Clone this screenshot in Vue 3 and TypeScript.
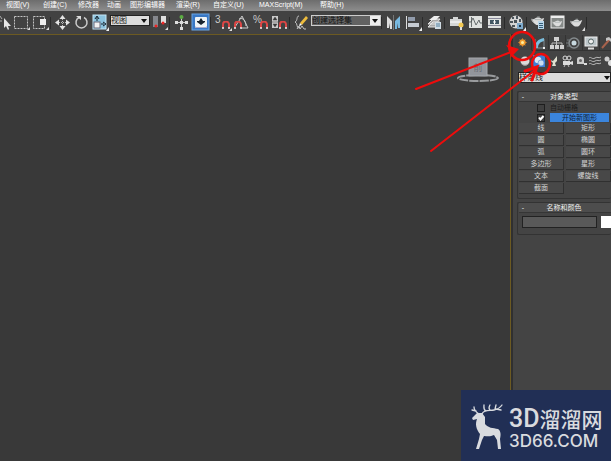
<script setup lang="ts">
import { ref } from 'vue'

interface Tool {
  id: string
  label: string
  glyph?: string
}

const menus: string[] = ['视图(V)', '创建(C)', '修改器', '动画', '图形编辑器', '渲染(R)', '自定义(U)', 'MAXScript(M)', '帮助(H)']

const selectTools: Tool[] = [
  { id: 'region', label: '矩形选择区域' },
  { id: 'window', label: '窗口/交叉' },
  { id: 'sep', label: '' },
  { id: 'move', label: '移动' },
  { id: 'rotate', label: '旋转' },
  { id: 'scale', label: '缩放' },
]
const snapTools: Tool[] = [
  { id: 'pivot', label: '使用轴点中心' },
  { id: 'sep', label: '' },
  { id: 'manipulate', label: '选择并操纵' },
  { id: 'keyboard', label: '键盘快捷键覆盖' },
  { id: 'sep', label: '' },
  { id: 'snap3', label: '捕捉开关', glyph: '3' },
  { id: 'angle', label: '角度捕捉' },
  { id: 'percent', label: '百分比捕捉', glyph: '%' },
  { id: 'spinner', label: '微调器捕捉' },
  { id: 'sep', label: '' },
  { id: 'sets', label: '编辑命名选择集' },
]
const renderTools: Tool[] = [
  { id: 'sep', label: '' },
  { id: 'mirror', label: '镜像' },
  { id: 'align', label: '对齐' },
  { id: 'sep', label: '' },
  { id: 'layers', label: '层管理器' },
  { id: 'sep', label: '' },
  { id: 'ribbon', label: '功能区' },
  { id: 'curve', label: '曲线编辑器' },
  { id: 'schematic', label: '图解视图' },
  { id: 'sep', label: '' },
  { id: 'material', label: '材质编辑器' },
  { id: 'sep', label: '' },
  { id: 'rendersetup', label: '渲染设置' },
  { id: 'frame', label: '渲染帧窗口' },
  { id: 'teapot', label: '渲染产品' },
  { id: 'sep', label: '' },
]
const tabs: Tool[] = [
  { id: 'create', label: '创建' },
  { id: 'modify', label: '修改' },
  { id: 'hierarchy', label: '层次' },
  { id: 'motion', label: '运动' },
  { id: 'display', label: '显示' },
  { id: 'utilities', label: '工具' },
]
const categories: Tool[] = [
  { id: 'geometry', label: '几何体' },
  { id: 'shapes', label: '图形' },
  { id: 'lights', label: '灯光' },
  { id: 'cameras', label: '摄影机' },
  { id: 'helpers', label: '辅助对象' },
  { id: 'warps', label: '空间扭曲' },
  { id: 'systems', label: '系统' },
]
const objectTypes: string[] = ['线', '矩形', '圆', '椭圆', '弧', '圆环', '多边形', '星形', '文本', '螺旋线', '截面']

const autoGrid = ref(false)
const startNew = ref(true)
const objectName = ref('')
const category = ref('shapes')
</script>

<template>
  <div class="app">
    <svg class="sprite" aria-hidden="true">
      <symbol id="i-cursor" viewBox="0 0 12 19"><path d="M0 3l2 3M0 8h2" stroke="#aaa" /><path d="M4 5v10l2-2 2 4 1-1-1-3h3z" fill="#e6e6e6" /></symbol>
      <symbol id="i-region" viewBox="0 0 19 19"><rect x="2.500" y="3.500" width="13" height="12" fill="none" stroke="#c4c4c4" stroke-dasharray="2 1" /><path d="M18 14v3h-3z" fill="#ddd" /></symbol>
      <symbol id="i-window" viewBox="0 0 19 19"><rect x="2.500" y="3.500" width="11" height="12" fill="none" stroke="#c4c4c4" stroke-dasharray="2 1" /><rect x="9" y="6" width="6" height="6" fill="#eee" /><path d="M18 14v3h-3z" fill="#ddd" /></symbol>
      <symbol id="i-move" viewBox="0 0 19 19"><path d="M9.500 2l3 4h-6zM9.500 17l3-4h-6zM2 9.500l4-3v6zM17 9.500l-4-3v6z" fill="#e4e4e4" /><path d="M9.500 6v7M6 9.500h7" stroke="#bbb" stroke-dasharray="1 1" /></symbol>
      <symbol id="i-rotate" viewBox="0 0 19 19"><path d="M7 4.500a5.500 5.500 0 1 0 5 0" fill="none" stroke="#ccc" stroke-width="1.500" /><path d="M4 3h5v4z" fill="#ddd" /></symbol>
      <symbol id="i-scale" viewBox="0 0 19 19"><rect x="2" y="2" width="13" height="14" fill="#8bc3de" stroke="#c5e6f5" /><rect x="3" y="9" width="6" height="6" fill="#f1f1f1" stroke="#667" /><path d="M6 8V4M4 6l2-3 2 3M10 11h3M12 9l3 2-3 2" fill="none" stroke="#15222c" /><path d="M18 14v4h-3z" fill="#eee" /></symbol>
      <symbol id="i-pivot" viewBox="0 0 19 19"><rect x="3" y="3" width="5" height="11" fill="#85878d" /><rect x="11" y="3" width="5" height="7" fill="#dedede" /><circle cx="6" cy="13" r="1.500" fill="#e22" /><circle cx="13" cy="10" r="1.500" fill="#e22" /><path d="M18 14v3h-3z" fill="#ddd" /></symbol>
      <symbol id="i-manipulate" viewBox="0 0 19 19"><path d="M9.500 4v12M4 9.500h12" stroke="#ccc" /><circle cx="9.500" cy="4" r="2" fill="#5cac43" /><path d="M3 8h3v3H3zM13 8h3v3h-3zM8 14h3v3H8zM8 8h3v3H8z" fill="#ddd" /></symbol>
      <symbol id="i-keyboard" viewBox="0 0 19 19"><rect x="1" y="1" width="17" height="16" fill="#3978c5" stroke="#6aa5e5" /><rect x="4" y="4" width="12" height="10" rx="1" fill="#eef4f7" /><path d="M10 5l2 3h2v1l-4 3-4-3V8h2z" fill="#18232e" /><path d="M4 14.500h12" stroke="#aac" /></symbol>
      <symbol id="i-magnet" viewBox="0 0 8 8"><path d="M1 7V3.500a3 3 0 0 1 6 0V7" fill="none" stroke="#dc4645" stroke-width="2" /><path d="M0 7h2M6 7h2" stroke="#eee" stroke-width="1.500" /></symbol>
      <symbol id="i-snap3" viewBox="0 0 19 19"><use href="#i-magnet" x="9" y="8" width="8" height="8" /><path d="M19 15v3h-3z" fill="#ddd" /></symbol>
      <symbol id="i-angle" viewBox="0 0 19 19"><path d="M3 14L10 3l6 12H9M7 6c4-2 7 2 7 7" fill="none" stroke="#ccc" /><use href="#i-magnet" x="2" y="8" width="8" height="8" /></symbol>
      <symbol id="i-percent" viewBox="0 0 19 19"><use href="#i-magnet" x="9" y="8" width="8" height="8" /></symbol>
      <symbol id="i-spinner" viewBox="0 0 19 19"><rect x="2" y="3" width="6" height="12" fill="#c8c8c8" /><path d="M5 4l2 3H3zM5 14l2-3H3zM2 9h6" fill="#333" stroke="#444" stroke-width=".5" /><use href="#i-magnet" x="9" y="8" width="8" height="8" /></symbol>
      <symbol id="i-sets" viewBox="0 0 19 19"><path d="M7 3C4 3 6 8 3 9c3 1 1 6 4 6M5 16l2-3 1 3 2-3 2 3h2" fill="none" stroke="#c4c4c4" /><path d="M8 10l6-7 2 2-6 7z" fill="#edbc3d" /><path d="M8 10l2 2-3 1z" fill="#fff" /></symbol>
      <symbol id="i-mirror" viewBox="0 0 19 19"><path d="M3 3l5 5v8H6v-6l-1 5H3z" fill="#dedede" /><path d="M16 3l-5 5v8h2v-6l1 5h2z" fill="#78b8df" /><path d="M9.500 2v15" stroke="#777" /></symbol>
      <symbol id="i-align" viewBox="0 0 19 19"><path d="M3.500 3v13" stroke="#ddd" /><rect x="5" y="4" width="7" height="4" fill="#929cac" /><rect x="5" y="10" width="11" height="4" fill="#c6cbd2" /><path d="M19 14v4h-3z" fill="#eee" /></symbol>
      <symbol id="i-layers" viewBox="0 0 19 19"><path d="M3 14l5-5h7l-4 5zM3 11l5-5h7l-4 5z" fill="#aaa" stroke="#e5e5e5" /><path d="M4 7l5-4h6l-4 4z" fill="#eee" /><rect x="10" y="9" width="6" height="7" fill="#d0dce4" /><path d="M11 11h4M11 13h4" stroke="#55809e" /></symbol>
      <symbol id="i-ribbon" viewBox="0 0 19 19"><path d="M3 6h3V4h5v2h4v7H3z" fill="#d4d6d6" /><path d="M3 9h12" stroke="#fff" /><circle cx="14" cy="12" r="2.500" fill="#f3c952" /><path d="M14 14v3" stroke="#ddd" stroke-width="2" /></symbol>
      <symbol id="i-curve" viewBox="0 0 19 19"><rect x="3" y="3" width="13" height="12" fill="#dfe1df" /><path d="M3 9h2l2-4 3 7 3-5 1 3h2M5.500 4v10" fill="none" stroke="#4a5052" stroke-width=".8" /></symbol>
      <symbol id="i-schematic" viewBox="0 0 19 19"><rect x="3" y="3" width="13" height="12" fill="#dfe1df" /><path d="M3 5.500h13M3 12.500h13" stroke="#889" /><rect x="5" y="7" width="9" height="4" fill="#415562" /><path d="M9.500 7v4M8 9h3" stroke="#fff" /></symbol>
      <symbol id="i-material" viewBox="0 0 19 19"><circle cx="9" cy="9" r="6.500" fill="#d5d5d5" /><path d="M5 4h2v2H5zM9 3h2v3H9zM3 8h3v2H3zM7 7h3v3H7zM12 6h2v3h-2zM5 12h3v2H5z" fill="#49535a" /><rect x="10" y="10" width="6" height="6" fill="#7eaacc" /><path d="M12 12h2v2h-2z" fill="#234" /><path d="M19 14v4h-3z" fill="#eee" /></symbol>
      <symbol id="i-pot" viewBox="0 0 16 12"><path d="M4 4c2-2 6-2 8 0l3-1c-1 3-2 6-5 8H6C3 9 3 7 1 5z" fill="#ddd" /><path d="M7 2h3M4 5h8" stroke="#a8b0b0" /><path d="M1 4c0 3 1 4 4 5" fill="none" stroke="#ddd" /></symbol>
      <symbol id="i-rendersetup" viewBox="0 0 19 19"><use href="#i-pot" x="2" y="2" width="14" height="11" /><rect x="9" y="8" width="6" height="8" fill="#b9d6ea" /><path d="M10 10.500h4M10 12.500h4M10 14.500h4" stroke="#365f7a" /></symbol>
      <symbol id="i-frame" viewBox="0 0 19 19"><rect x="3" y="3" width="13" height="12" fill="#858987" stroke="#eee" /><path d="M3 4h13" stroke="#eee" stroke-width="2" /><use href="#i-pot" x="4" y="6" width="11" height="8" /></symbol>
      <symbol id="i-teapot" viewBox="0 0 19 19"><use href="#i-pot" x="3" y="4" width="13" height="11" /><path d="M18 14v4h-3z" fill="#ddd" /></symbol>
      <symbol id="i-create" viewBox="0 0 15 15"><path d="M7.500 3v9M3 7.500h9M4.500 4.500l6 6M10.500 4.500l-6 6" stroke="#a56830" /><circle cx="7.500" cy="7.500" r="3.200" fill="#f19b2d" /><circle cx="7.500" cy="7.500" r="1.500" fill="#fff0a0" /></symbol>
      <symbol id="i-modify" viewBox="0 0 15 15"><path d="M3 13c0-6 3-9 9-10v3C8 7 6 9 6 13z" fill="#79bfe0" /><path d="M3 4v9h9V4" fill="none" stroke="#9aaeb8" stroke-width=".7" /><path d="M2 12h2v2H2zM11 12h2v2h-2z" fill="#eee" /></symbol>
      <symbol id="i-hierarchy" viewBox="0 0 15 15"><path d="M5 2h5v4H5zM1 10h4v4H1zM6 10h4v4H6zM11 10h4v4h-4z" fill="#d0d0d0" /><path d="M7.500 6v4M3 10V8h10v2" fill="none" stroke="#bbb" /></symbol>
      <symbol id="i-motion" viewBox="0 0 15 15"><circle cx="8" cy="8" r="5" fill="none" stroke="#858b8e" stroke-width="1.500" /><circle cx="8" cy="8" r="2.500" fill="#c7d8df" /><path d="M1 5h4M0 8h3M1 11h4" stroke="#72797c" /></symbol>
      <symbol id="i-display" viewBox="0 0 15 15"><rect x="2" y="2" width="12" height="9" fill="#bdc6ca" stroke="#eee" /><circle cx="8" cy="6.500" r="2.500" fill="#eee" stroke="#566" /><path d="M5 13.500h6" stroke="#ddd" stroke-width="2" /></symbol>
      <symbol id="i-utilities" viewBox="0 0 15 15"><path d="M2 13l8-9" stroke="#a8624c" stroke-width="2" /><path d="M6 3l3-1 6 5-2 2-4-4-3 1z" fill="#c4c4c4" /></symbol>
      <symbol id="i-geometry" viewBox="0 0 14 14"><circle cx="7" cy="7" r="4.500" fill="#dadada" /><path d="M3 9c2 3 6 3 8 0" stroke="#999" fill="none" /></symbol>
      <symbol id="i-shapes" viewBox="0 0 14 14"><rect x="1" y="1" width="12" height="12" fill="#3c7ed6" /><circle cx="6" cy="6" r="3.300" fill="#d9e8f5" /><circle cx="9" cy="9" r="3" fill="#cadef0" stroke="#5d8fcf" stroke-width=".7" /></symbol>
      <symbol id="i-lights" viewBox="0 0 14 14"><path d="M4 6l3 1 4-5v5L9 9l1 3H6l1-3z" fill="#e0e0d0" /></symbol>
      <symbol id="i-cameras" viewBox="0 0 14 14"><circle cx="5" cy="4" r="2" fill="none" stroke="#ddd" /><circle cx="9" cy="4" r="2" fill="none" stroke="#ddd" /><path d="M3 7h7v4H3zM10 8l3-1v4l-3-1z" fill="#ddd" /><path d="M5 11l-1 2M8 11l1 2" stroke="#bbb" /></symbol>
      <symbol id="i-helpers" viewBox="0 0 14 14"><path d="M3 10V5c0-3 7-3 7 0v5z" fill="#ccc" /><circle cx="6.500" cy="6.500" r="1.500" fill="#666" /><path d="M10 9h3v2h-3z" fill="#ddd" /></symbol>
      <symbol id="i-warps" viewBox="0 0 14 14"><path d="M1 4c2-2 3 2 6 0s3 1 6-1M1 7c2-2 3 2 6 0s3 1 6-1M1 10c2-2 3 2 6 0s3 1 6-1" fill="none" stroke="#bbb" /></symbol>
      <symbol id="i-systems" viewBox="0 0 14 14"><circle cx="5" cy="5" r="2.500" fill="#ccc" /><circle cx="9" cy="9" r="3" fill="#ddd" /></symbol>
    </svg>

    <nav class="menubar" aria-label="主菜单">
      <a v-for="m in menus" :key="m" href="#">{{ m }}</a>
    </nav>

    <header class="toolbar">
      <button class="cursor" aria-label="选择对象"><svg><use href="#i-cursor" /></svg></button>
      <template v-for="(t, i) in selectTools" :key="'a' + i">
        <span v-if="t.id === 'sep'" class="sep"></span>
        <button v-else :aria-label="t.label"><svg><use :href="'#i-' + t.id" /></svg></button>
      </template>
      <div class="combo coord">
        <select aria-label="参考坐标系"><option>视图</option></select>
        <svg viewBox="0 0 10 9"><path d="M2 3h6L5 7z" fill="#111" /></svg>
      </div>
      <template v-for="(t, i) in snapTools" :key="'b' + i">
        <span v-if="t.id === 'sep'" class="sep"></span>
        <button v-else :aria-label="t.label">
          <span v-if="t.glyph" class="glyph">{{ t.glyph }}</span>
          <svg><use :href="'#i-' + t.id" /></svg>
        </button>
      </template>
      <div class="combo named">
        <select aria-label="命名选择集"><option>创建选择集</option></select>
        <svg viewBox="0 0 10 9"><path d="M0 0h10v9H0z" fill="#eee" /><path d="M2 3h6L5 7z" fill="#111" /></svg>
      </div>
      <template v-for="(t, i) in renderTools" :key="'c' + i">
        <span v-if="t.id === 'sep'" class="sep"></span>
        <button v-else :aria-label="t.label"><svg><use :href="'#i-' + t.id" /></svg></button>
      </template>
    </header>

    <main class="work">
      <section class="viewport" aria-label="视口">
        <svg class="cube" viewBox="0 0 44 26">
          <ellipse cx="22" cy="21" rx="20" ry="3" fill="none" stroke="#9a9c9e" stroke-width="2" stroke-dasharray="9 1" />
          <rect x="13" y="1" width="18" height="18" fill="#92959b" stroke="#a5a8ac" />
          <text x="22" y="14" text-anchor="middle" font-size="9" fill="#686c74">前</text>
        </svg>
      </section>

      <aside class="panel">
        <div class="tabs">
          <button v-for="t in tabs" :key="t.id" :aria-label="t.label" :class="{ on: t.id === 'create' }"><svg><use :href="'#i-' + t.id" /></svg></button>
        </div>
        <div class="cats">
          <button v-for="c in categories" :key="c.id" :aria-label="c.label" :aria-pressed="category === c.id" @click="category = c.id"><svg><use :href="'#i-' + c.id" /></svg></button>
        </div>
        <div class="combo kind">
          <select aria-label="图形类别"><option>样条线</option></select>
          <svg viewBox="0 0 10 9"><path d="M4 3h6L7 7z" fill="#111" /></svg>
        </div>

        <section class="rollout">
          <h2><span class="minus">-</span>对象类型</h2>
          <div class="checks">
            <span class="box"><input id="auto" v-model="autoGrid" type="checkbox" /><svg v-if="autoGrid" viewBox="0 0 8 8"><path d="M2 3.500l1.500 2L6.500 2" /></svg></span>
            <label for="auto" class="dim">自动栅格</label>
            <span class="box"><input id="start" v-model="startNew" type="checkbox" /><svg v-if="startNew" viewBox="0 0 8 8"><path d="M2 3.500l1.500 2L6.500 2" /></svg></span>
            <label for="start" class="start">开始新图形</label>
          </div>
          <div class="types">
            <button v-for="o in objectTypes" :key="o">{{ o }}</button>
          </div>
        </section>

        <section class="rollout">
          <h2><span class="minus">-</span>名称和颜色</h2>
          <div class="name">
            <input v-model="objectName" type="text" aria-label="名称" />
            <button class="swatch" aria-label="对象颜色"></button>
          </div>
        </section>
      </aside>
    </main>

    <svg class="marks" viewBox="0 0 200 130" aria-hidden="true">
      <g fill="none" stroke="#ee0c0c" stroke-width="2" stroke-linecap="round">
        <ellipse cx="111" cy="16" rx="13" ry="14" stroke-width="2.500" />
        <ellipse cx="130" cy="34" rx="9" ry="10" stroke-width="2.500" />
        <path d="M5 59L105 20M20 121L124 40" />
        <path d="M114 41l12-4-5 13" stroke-width="3" />
      </g>
      <path d="M95 15l13 4-9 9 1-6z" fill="#ee0c0c" />
    </svg>

    <div class="brand">
      <svg viewBox="0 0 34 46" aria-hidden="true">
        <path d="M2 14l5-5 5 0 3 4 0 7c3 4 8 4 13 5 3 2 3 6 2 10l1 10h-3l-1-9-3-5c-4 2-7 1-10 1l-2 4-3 9H6l3-10 1-5C6 25 5 20 7 15l-4 1z" fill="#d9dbdf" />
        <path d="M9 10C6 8 4 6 4 3M6 7L2 6M12 10c2-5 8-3 12-4s6-2 8-5M16 7c-3-2-2-4-2-6M20 6c-2-2-1-3 0-5M25 5l1-4M26 5l5 1" fill="none" stroke="#d9dbdf" stroke-width="1.300" stroke-linecap="round" />
      </svg>
      <div>
        <div class="line1"><span>3D</span>溜溜网</div>
        <div class="line2">3D66.COM</div>
      </div>
    </div>
  </div>
</template>

<style>
body {
  margin: 0;
  background: #393939;
}
</style>

<style scoped>
.app {
  position: relative;
  display: flex;
  flex-direction: column;
  min-height: 100vh;
  overflow: hidden;
  color: #d2d2d2;
  background: #393939;
  font: 7px/10px "Liberation Sans", "Noto Sans CJK SC", sans-serif;
}
.sprite {
  position: absolute;
  width: 0;
  height: 0;
}
* {
  box-sizing: border-box;
}
button,
input,
select {
  margin: 0;
  padding: 0;
  border: 0;
  border-radius: 0;
  color: inherit;
  background: none;
  font: inherit;
}
svg {
  display: block;
}
.menubar {
  display: grid;
  grid-template-columns: 37px 35px 29px 23px 46px 37px 46px 61px auto;
  height: 11px;
  padding-left: 6px;
  background: linear-gradient(#6d6d6d, #8d8d8d);
}
.menubar a {
  color: #fff;
  text-decoration: none;
  white-space: nowrap;
}
.toolbar {
  display: flex;
  align-items: center;
  height: 23px;
  background: #424242;
}
.toolbar button {
  display: grid;
}
.toolbar button,
.toolbar button svg {
  flex: none;
  width: 19px;
  height: 19px;
}
.toolbar .cursor,
.toolbar .cursor svg {
  width: 12px;
}
.toolbar button svg,
.glyph {
  grid-area: 1 / 1;
}
.glyph {
  padding: 1px 0 0 2px;
  color: #ccc;
  font-size: 10px;
  line-height: 12px;
  text-align: left;
}
.sep {
  flex: none;
  width: 3px;
  height: 12px;
  border-left: 1px solid #2b2b2b;
}
.combo {
  display: grid;
  flex: none;
  grid-template-columns: 1fr 10px;
  align-items: center;
  height: 11px;
  border: 1px solid #222;
  color: #222;
  background: #dcdcdc;
}
.combo select {
  grid-area: 1 / 1 / 2 / 3;
  width: 100%;
  height: 9px;
  font-size: 8px;
  line-height: 9px;
  appearance: none;
}
.combo svg {
  grid-area: 1 / 2;
  width: 10px;
  height: 9px;
  pointer-events: none;
}
.coord {
  width: 40px;
  margin-bottom: 4px;
}
.named {
  width: 70px;
  margin-bottom: 4px;
  border-color: #ccc;
  color: #111;
  background: #626262;
}
.work {
  display: flex;
  flex: 1;
}
.viewport {
  position: relative;
  flex: 1;
  border: solid #6c5a22;
  border-width: 1px 1px 0 0;
  background: #393939;
}
.cube {
  position: absolute;
  top: 22px;
  right: 10px;
  width: 44px;
  height: 26px;
}
.panel {
  width: 100px;
  padding: 1px 0 0 2px;
  overflow: hidden;
  border-left: 2px solid #303030;
  background: #444;
}
.tabs,
.cats {
  display: flex;
}
.tabs button {
  flex: none;
  width: 17px;
  height: 16px;
  border: solid #333;
  border-width: 0 1px 1px 0;
  background: #414141;
}
.tabs .on {
  border-bottom-color: #444;
}
.tabs svg {
  width: 15px;
  height: 15px;
}
.cats {
  padding: 3px 0 4px 3px;
}
.cats button,
.cats svg {
  flex: none;
  width: 14px;
  height: 14px;
}
.kind {
  margin-left: 3px;
}
.rollout {
  margin: 8px 0 0 2px;
  padding: 0 0 4px 1px;
  border: 1px solid #333;
  border-right: 0;
  border-radius: 2px;
}
.rollout + .rollout {
  margin-top: 3px;
}
h2 {
  display: grid;
  grid-template-columns: 8px 1fr 8px;
  margin: 0;
  padding-right: 2px;
  border-bottom: 1px solid #363636;
  color: #eee;
  background: #4d4d4d;
  font-size: 7px;
  font-weight: 400;
  line-height: 9px;
  text-align: center;
}
.checks {
  display: grid;
  grid-template-columns: 8px 1fr;
  align-items: center;
  gap: 1px 5px;
  padding: 1px 2px 0 18px;
  line-height: 9px;
}
.box {
  display: grid;
  width: 8px;
  height: 8px;
}
.box input,
.box svg {
  grid-area: 1 / 1;
  width: 8px;
  height: 8px;
}
.box input {
  border: 1px solid #1e1e1e;
  background: #3f3f3f;
  appearance: none;
}
.box svg {
  fill: none;
  stroke: #fff;
  stroke-width: 2;
  pointer-events: none;
}
.dim {
  color: #1c1c1c;
}
.start {
  color: #102036;
  background: #3b85dd;
  text-align: center;
}
.types {
  display: grid;
  grid-template-columns: 1fr 1fr;
  gap: 1px 2px;
  padding-top: 1px;
}
.types button {
  height: 11px;
  border: solid #303030;
  border-width: 0 1px 1px 0;
  background: #484848;
  line-height: 10px;
}
.name {
  display: flex;
  gap: 4px;
  padding: 3px 0 2px 3px;
}
.name input {
  flex: 1;
  min-width: 0;
  height: 12px;
  border: 1px solid #222;
  background: #595959;
}
.swatch {
  width: 10px;
  height: 12px;
  background: #fff;
}
.marks {
  position: absolute;
  top: 30px;
  right: 0;
  width: 200px;
  height: 130px;
  pointer-events: none;
}
.brand {
  position: absolute;
  right: 0;
  bottom: 0;
  display: flex;
  gap: 5px;
  width: 150px;
  height: 71px;
  padding: 14px 0 0 9px;
  color: #d9dbdf;
  background: #212f55;
  white-space: nowrap;
}
.brand svg {
  flex: none;
  width: 34px;
  height: 46px;
}
.line1 {
  font: 500 21px/28px "Noto Sans CJK SC", sans-serif;
}
.line1 span {
  font: 500 25px/28px Roboto, sans-serif;
}
.line2 {
  font: 500 17px/16px Inter, sans-serif;
}
</style>
